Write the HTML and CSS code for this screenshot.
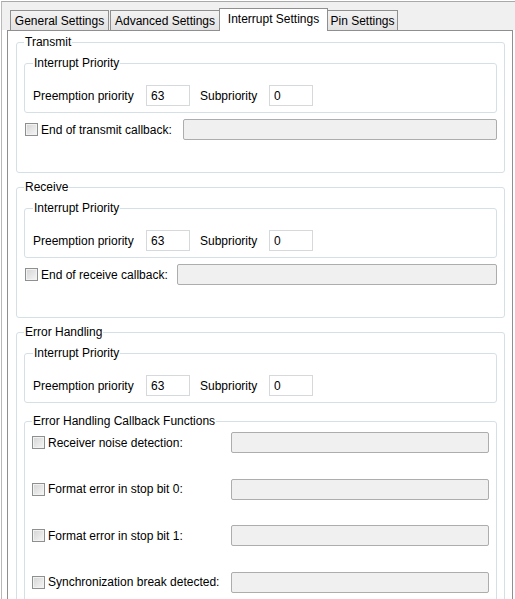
FILE: index.html
```html
<!DOCTYPE html>
<html>
<head>
<meta charset="utf-8">
<link rel="stylesheet" href="styles.css">
</head>
<body>
<div class="frame">
  <div class="tabbar">
    <div class="tab t-general">General Settings</div>
    <div class="tab t-advanced">Advanced Settings</div>
    <div class="tab active t-interrupt">Interrupt Settings</div>
    <div class="tab t-pin">Pin Settings</div>
  </div>
  <div class="panel">
    <fieldset class="group outer">
      <legend>Transmit</legend>
      <fieldset class="group inner">
        <legend>Interrupt Priority</legend>
        <div class="prio-row">
          <span class="lbl-pre">Preemption priority</span>
          <span class="num">63</span>
          <span class="lbl-sub">Subpriority</span>
          <span class="num">0</span>
        </div>
      </fieldset>
      <div class="cb-row">
        <span class="check"></span>
        <span class="cb-label w-transmit">End of transmit callback:</span>
        <span class="field"></span>
      </div>
    </fieldset>

    <fieldset class="group outer next">
      <legend>Receive</legend>
      <fieldset class="group inner">
        <legend>Interrupt Priority</legend>
        <div class="prio-row">
          <span class="lbl-pre">Preemption priority</span>
          <span class="num">63</span>
          <span class="lbl-sub">Subpriority</span>
          <span class="num">0</span>
        </div>
      </fieldset>
      <div class="cb-row">
        <span class="check"></span>
        <span class="cb-label w-receive">End of receive callback:</span>
        <span class="field"></span>
      </div>
    </fieldset>

    <fieldset class="group outer next">
      <legend>Error Handling</legend>
      <fieldset class="group inner">
        <legend>Interrupt Priority</legend>
        <div class="prio-row">
          <span class="lbl-pre">Preemption priority</span>
          <span class="num">63</span>
          <span class="lbl-sub">Subpriority</span>
          <span class="num">0</span>
        </div>
      </fieldset>
      <fieldset class="group callbacks">
        <legend>Error Handling Callback Functions</legend>
        <div class="cb-list">
          <div class="cb-row flush">
            <span class="check"></span>
            <span class="cb-label w-err">Receiver noise detection:</span>
            <span class="field"></span>
          </div>
          <div class="cb-row flush">
            <span class="check"></span>
            <span class="cb-label w-err">Format error in stop bit 0:</span>
            <span class="field"></span>
          </div>
          <div class="cb-row flush">
            <span class="check"></span>
            <span class="cb-label w-err">Format error in stop bit 1:</span>
            <span class="field"></span>
          </div>
          <div class="cb-row flush">
            <span class="check"></span>
            <span class="cb-label w-err">Synchronization break detected:</span>
            <span class="field"></span>
          </div>
        </div>
      </fieldset>
    </fieldset>
  </div>
</div>
</body>
</html>
```

FILE: styles.css
```css
html, body {
  margin: 0;
  padding: 0;
  background: #ffffff;
  width: 515px;
  height: 599px;
  overflow: hidden;
}

body {
  font-family: "Liberation Sans", Arial, sans-serif;
  font-size: 12px;
  color: #000000;
}

.frame {
  margin: 1px 0 0 1px;
  border-top: 1px solid #a9a9a9;
  border-left: 1px solid #b9b9b9;
  height: 700px;
}

.tabbar {
  height: 28px;
  background: #f0f0f0;
  display: flex;
  align-items: flex-end;
  padding-left: 8px;
}

.tab {
  box-sizing: border-box;
  height: 20px;
  border: 1px solid #8f8f8f;
  border-bottom: none;
  background: linear-gradient(#f3f3f3, #e2e2e2);
  display: flex;
  align-items: center;
  justify-content: center;
  line-height: 14px;
  white-space: nowrap;
}

.t-general { width: 99px; }
.t-advanced { width: 110px; margin-left: 1px; }
.t-interrupt { width: 109px; margin-left: -1px; }
.t-pin { width: 71px; margin-left: -1px; }

.tab.active {
  height: 23px;
  margin-bottom: -1px;
  background: #ffffff;
  position: relative;
  z-index: 1;
  padding-bottom: 2px;
}

.panel {
  box-sizing: border-box;
  width: 506px;
  margin-left: 5px;
  border: 1px solid #8f8f8f;
  border-bottom: none;
  background: #ffffff;
  padding: 4px 7px 0 8px;
  height: 700px;
}

fieldset.group {
  margin: 0;
  min-width: 0;
  border: 1px solid #d5dfe6;
  border-radius: 3px;
}

fieldset.group legend {
  padding: 0 1px;
  margin: 0;
  line-height: 14px;
  font-size: 12px;
}

.outer {
  padding: 7px 7px 32px 7px;
}

.outer.next {
  margin-top: 7px;
}

.inner {
  padding: 15px 7px 6px 8px;
}

.prio-row {
  display: flex;
  align-items: center;
  height: 21px;
}

.lbl-pre {
  width: 113px;
  white-space: nowrap;
}

.lbl-sub {
  width: 69px;
  margin-left: 10px;
  white-space: nowrap;
}

.num {
  box-sizing: border-box;
  width: 44px;
  height: 21px;
  border: 1px solid #d6d9dc;
  padding-left: 4px;
  display: flex;
  align-items: center;
  background: #ffffff;
}

.cb-row {
  display: flex;
  align-items: center;
  height: 21px;
  margin-top: 6px;
}

.cb-row.flush {
  margin-top: 0;
}

.check {
  box-sizing: border-box;
  width: 13px;
  height: 13px;
  margin-left: 1px;
  margin-right: 3px;
  border: 1px solid #8e8f8f;
  background: linear-gradient(135deg, #d4d4d4, #f6f6f6);
  box-shadow: inset 0 0 0 1px #f2f2f2;
  flex: none;
}

.cb-list .check {
  margin-left: 0;
}

.cb-label {
  white-space: nowrap;
  flex: none;
}

.w-transmit { width: 142px; }
.w-receive { width: 136px; }
.w-err { width: 183px; }

.field {
  box-sizing: border-box;
  flex: 1;
  height: 21px;
  border: 1px solid #adadad;
  border-radius: 2px;
  background: #f0f0f0;
}

.callbacks {
  margin-top: 11px !important;
  padding: 4px 7px 20px 7px;
}

.cb-list {
  display: flex;
  flex-direction: column;
  gap: 25.5px;
}
```
